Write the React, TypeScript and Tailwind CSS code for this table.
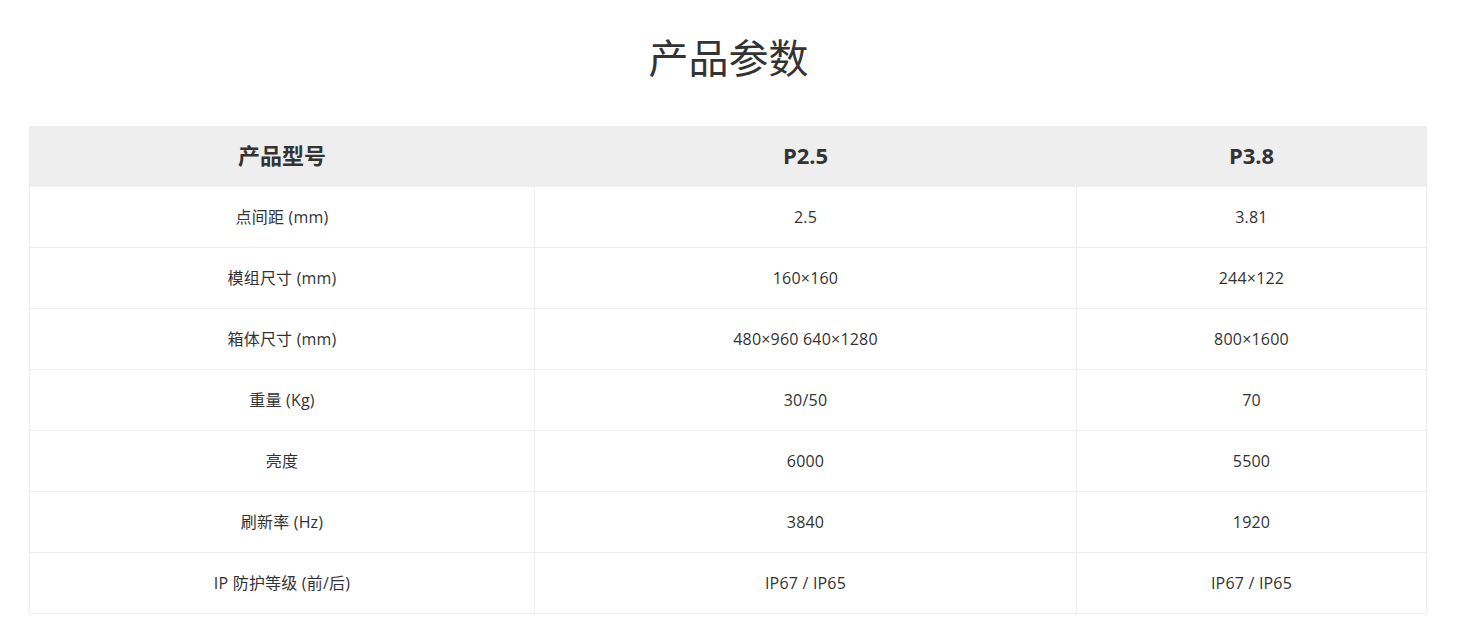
const rows: [string, string, string][] = [
  ['点间距 (mm)', '2.5', '3.81'],
  ['模组尺寸 (mm)', '160×160', '244×122'],
  ['箱体尺寸 (mm)', '480×960 640×1280', '800×1600'],
  ['重量 (Kg)', '30/50', '70'],
  ['亮度', '6000', '5500'],
  ['刷新率 (Hz)', '3840', '1920'],
  ['IP 防护等级 (前/后)', 'IP67 / IP65', 'IP67 / IP65'],
]

export default function App() {
  return (
    <div
      className="min-h-screen bg-white text-[#333]"
      style={{ fontFamily: '"Open Sans", "Noto Sans CJK SC", sans-serif' }}
    >
      <h2 className="pt-[29px] text-center text-[40px] leading-[58px] font-normal text-[#333]">
        产品参数
      </h2>

      <div className="px-[29px] pt-[39px]">
        <table className="w-[1397px] border-collapse table-fixed">
          <colgroup>
            <col className="w-[505px]" />
            <col className="w-[542px]" />
            <col className="w-[350px]" />
          </colgroup>
          <thead>
            <tr className="bg-[#eeeeee]">
              <th className="h-[60px] pb-[2px] text-[22px] font-bold text-[#333] border border-[#eeeeee]">产品型号</th>
              <th className="h-[60px] pb-[2px] text-[22px] font-bold text-[#333] border border-[#eeeeee]">P2.5</th>
              <th className="h-[60px] pb-[2px] text-[22px] font-bold text-[#333] border border-[#eeeeee]">P3.8</th>
            </tr>
          </thead>
          <tbody>
            {rows.map(r => (
              <tr key={r[0]}>
                {r.map((c, i) => (
                  <td
                    key={i}
                    className="h-[61px] text-center text-[16px] tracking-[0.2px] text-[#333] border border-[#eeeeee]"
                  >
                    {c}
                  </td>
                ))}
              </tr>
            ))}
          </tbody>
        </table>
      </div>
    </div>
  )
}
